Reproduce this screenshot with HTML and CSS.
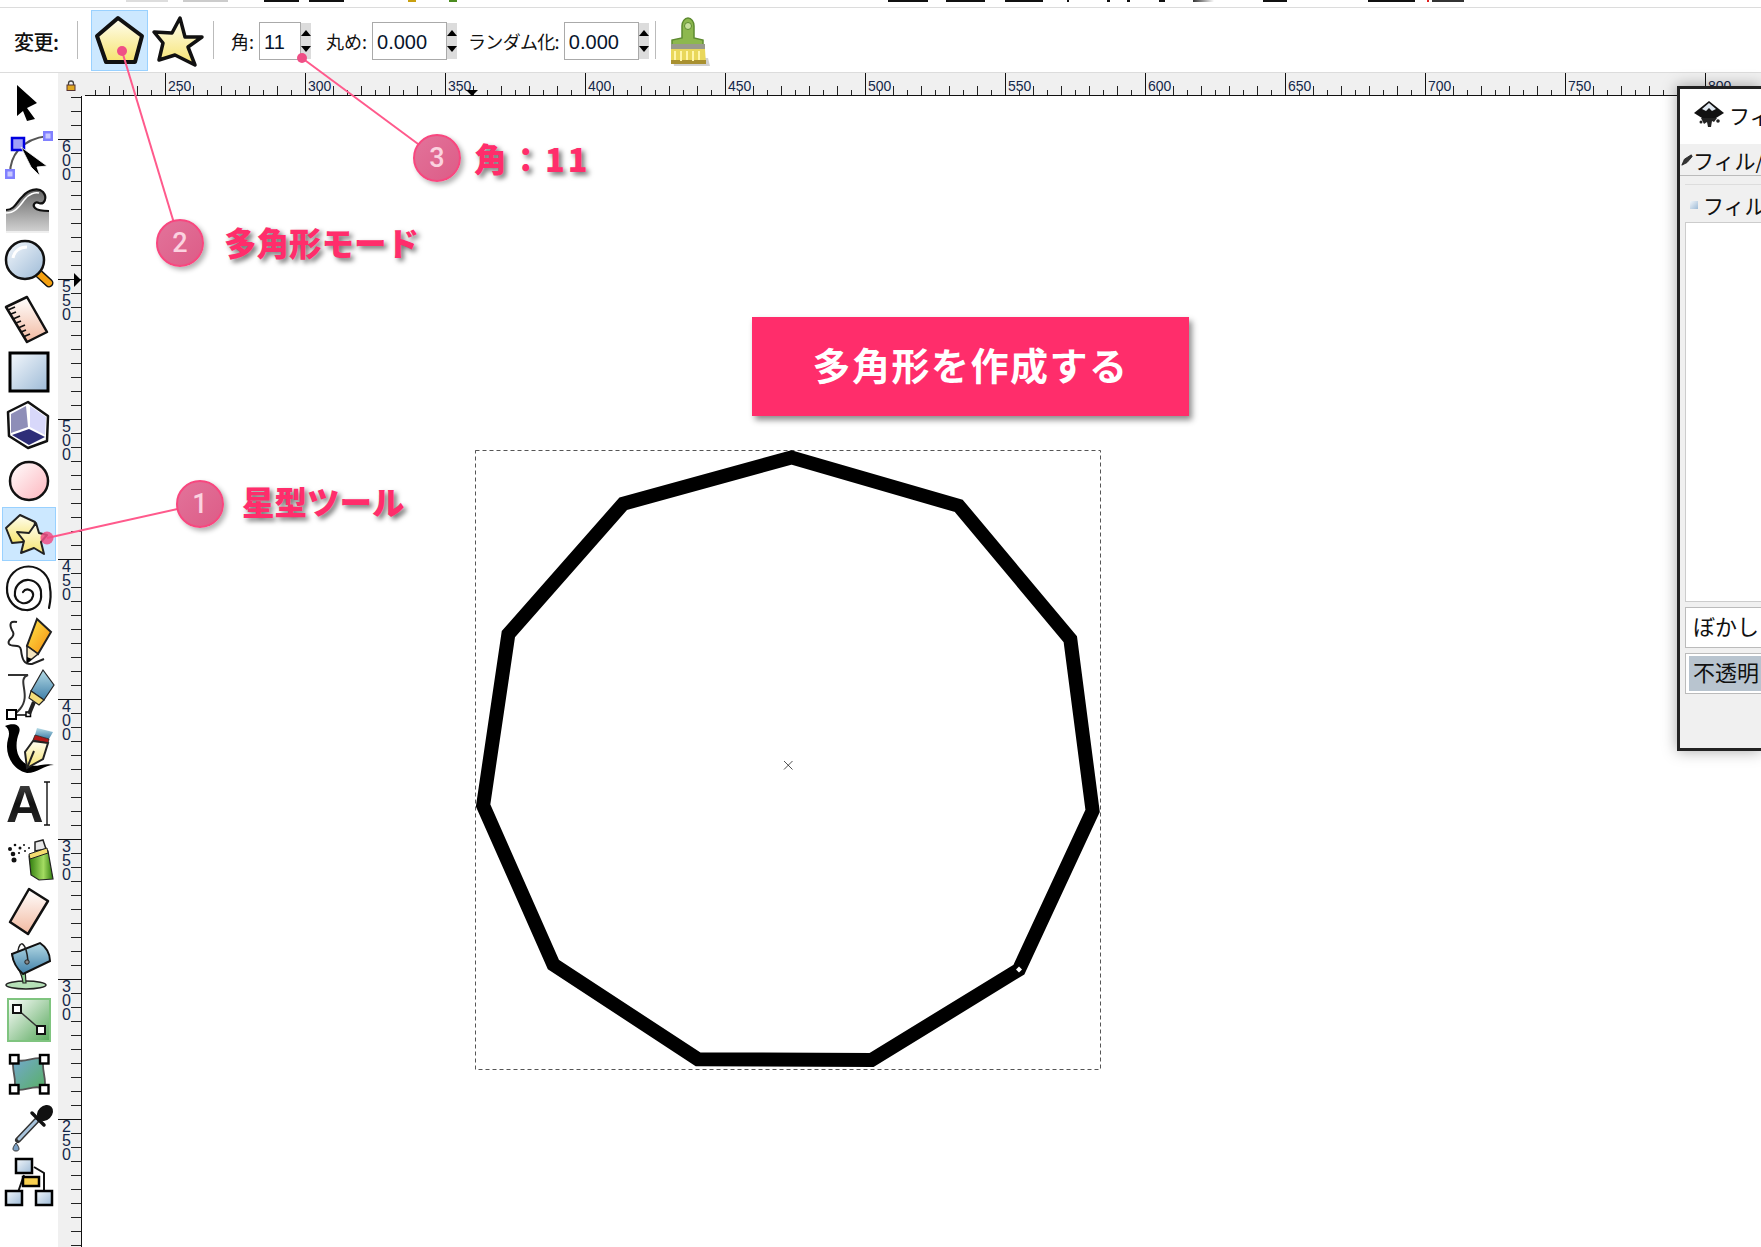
FILE: index.html
```html
<!DOCTYPE HTML>
<html>
    <head>
        <meta charset="UTF-8">
        <title>多角形を作成する</title>
        <link rel="stylesheet" href="styles.css">
    </head>
    <body>
        <!-- shared gradients -->
        <svg class="defs" width="0" height="0">
            <defs>
                <linearGradient id="gYel" x1="0" y1="0" x2="0" y2="1"><stop offset="0" stop-color="#fffef2"/><stop offset="1" stop-color="#f6e36e"/></linearGradient>
                <linearGradient id="gBlue" x1="0" y1="0" x2="1" y2="1"><stop offset="0" stop-color="#f4f8fc"/><stop offset="1" stop-color="#9dbad6"/></linearGradient>
                <linearGradient id="gSkin" x1="0" y1="0" x2="0" y2="1"><stop offset="0" stop-color="#fff"/><stop offset="1" stop-color="#f2b9a0"/></linearGradient>
                <linearGradient id="gPink" x1="0" y1="0" x2="1" y2="1"><stop offset="0" stop-color="#fff"/><stop offset="1" stop-color="#fdb4bc"/></linearGradient>
                <linearGradient id="gGray" x1="0" y1="0" x2="0" y2="1"><stop offset="0" stop-color="#666"/><stop offset="1" stop-color="#d0d0d0"/></linearGradient>
                <linearGradient id="gGreen" x1="0" y1="0" x2="1" y2="1"><stop offset="0" stop-color="#fff"/><stop offset="1" stop-color="#58a85c"/></linearGradient>
                <linearGradient id="gOrange" x1="0" y1="0" x2="1" y2="1"><stop offset="0" stop-color="#ffe94a"/><stop offset="1" stop-color="#f48a10"/></linearGradient>
                <linearGradient id="gSteel" x1="0" y1="0" x2="0" y2="1"><stop offset="0" stop-color="#b5dbe6"/><stop offset="1" stop-color="#3f7fa8"/></linearGradient>
                <linearGradient id="gSpray" x1="0" y1="0" x2="1" y2="0"><stop offset="0" stop-color="#2f7c0c"/><stop offset=".6" stop-color="#a4dc62"/><stop offset="1" stop-color="#2f7c0c"/></linearGradient>
                <linearGradient id="gMesh" x1="0" y1="0" x2="1" y2="1"><stop offset="0" stop-color="#74a8d0"/><stop offset="1" stop-color="#58b064"/></linearGradient>
                <linearGradient id="gInk" x1="0" y1="0" x2="0" y2="1"><stop offset="0" stop-color="#555"/><stop offset=".5" stop-color="#111"/><stop offset="1" stop-color="#333"/></linearGradient>
            </defs>
        </svg>

        <div class="topStrip"></div>

        <div class="toolbar">
            <span class="barLabel">変更:</span>
            <i class="sep sepA"></i>
            <button class="modeBtn on">
                <svg width="57" height="61" viewBox="0 0 57 61"><polygon points="27,8 51,26 44,52 15,52 6,26" fill="url(#gYel)" stroke="#111" stroke-width="4" stroke-linejoin="round"/></svg>
            </button>
            <button class="modeBtn">
                <svg width="57" height="61" viewBox="0 0 57 61"><polygon points="30,8 35,27 52,27 38,37 45,55 25,45 9,50 13,33 4,22 22,23" fill="url(#gYel)" stroke="#111" stroke-width="3.5" stroke-linejoin="round"/></svg>
            </button>
            <i class="sep sepB"></i>
            <label class="field f1">角:<span class="numBox w42">11</span><span class="spin"><b class="up"></b><b class="down"></b></span></label>
            <label class="field f2">丸め:<span class="numBox w74">0.000</span><span class="spin"><b class="up"></b><b class="down"></b></span></label>
            <label class="field f3">ランダム化:<span class="numBox w74">0.000</span><span class="spin"><b class="up"></b><b class="down"></b></span></label>
            <i class="sep sepC"></i>
            <svg class="brush" width="44" height="52" viewBox="0 0 44 52">
                <path d="M7 42 L42 42 L44 50 L8 50Z" fill="#999" opacity=".45"/>
                <path d="M16 10 a6 8 0 0 1 12 0 L28 22 L37 24 L37 30 L6 30 L6 24 L16 22Z" fill="#8db84e" stroke="#5d8a30" stroke-width="1.5"/>
                <circle cx="22" cy="10" r="3.5" fill="#c7df9a" stroke="#5d8a30"/>
                <rect x="5" y="28" width="34" height="5" fill="#9a9a8c"/>
                <path d="M5 33 L39 33 L40 48 L5 48Z" fill="#e9d75a"/>
                <path d="M5 44 L40 44 L40 48 L5 48Z" fill="#a89030"/>
                <path d="M9 35 L9 44 M15 35 L15 45 M21 35 L21 44 M27 35 L27 45 M33 35 L33 44" stroke="#fff5a8" stroke-width="2"/>
            </svg>
        </div>

        <div class="main">
            <div class="toolbox">
                <div class="tool"><svg viewBox="0 0 54 54"><polygon points="15,10 35,28 25,33 33,44 25,46 21,36 15,41" fill="#000"/></svg></div>
                <div class="tool"><svg viewBox="0 0 54 54"><path d="M8 45 C8 28 18 10 46 7" fill="none" stroke="#555" stroke-width="2"/><rect x="3" y="40" width="10" height="10" fill="#8080ff"/><rect x="5.5" y="42.5" width="5" height="5" fill="#c8c8ff"/><rect x="41" y="2" width="10" height="10" fill="#8080ff"/><rect x="43.500" y="4.500" width="5" height="5" fill="#c8c8ff"/><rect x="10" y="9" width="12" height="12" fill="#a0a0f8" stroke="#0000e0" stroke-width="2.5"/><polygon points="19,18 45,37 35,38 38,47 29,38" fill="#000" stroke="#fff" stroke-width=".8"/></svg></div>
                <div class="tool"><svg viewBox="0 0 54 54"><path d="M4 27 C13 27 15 18 21 13 C26 7 36 4 41 9 C46 15 42 22 37 20 C33 18 30 22 33 25 C35 27 38 28 47 28 L47 48 L4 48Z" fill="url(#gGray)"/><path d="M4 27 C13 27 15 18 21 13 C26 7 36 4 41 9 C46 15 42 22 37 20 C33 18 30 22 33 25 C35 27 38 28 47 28" fill="none" stroke="#111" stroke-width="2.2"/><path d="M4 30 C14 30 18 22 23 16 C27 11 33 9 37 10" fill="none" stroke="#fff" stroke-width="1.6"/><path d="M4 49 L47 49" stroke="#ddd"/></svg></div>
                <div class="tool"><svg viewBox="0 0 54 54"><path d="M33 33 L47 46" stroke="#111" stroke-width="9" stroke-linecap="round"/><path d="M36 36 L47 46" stroke="#f4a010" stroke-width="6" stroke-linecap="round"/><path d="M33 33 L37 37" stroke="#999" stroke-width="7"/><circle cx="23" cy="23" r="19" fill="url(#gBlue)" stroke="#111" stroke-width="2.5"/><path d="M11 21 C12 14 18 10 25 10" fill="none" stroke="#fff" stroke-width="3"/></svg></div>
                <div class="tool"><svg viewBox="0 0 54 54"><polygon points="4,16 25,6 45,41 25,51" fill="url(#gSkin)" stroke="#111" stroke-width="2.5" stroke-linejoin="round"/><path d="M6 19 L13 16 M9 23 L14 21 M11 28 L18 25 M14 32 L19 30 M16 37 L23 34 M19 41 L24 39 M21 46 L28 43" stroke="#111" stroke-width="1.8"/></svg></div>
                <div class="tool"><svg viewBox="0 0 54 54"><rect x="8" y="8" width="38" height="38" fill="url(#gBlue)" stroke="#000" stroke-width="3"/></svg></div>
                <div class="tool"><svg viewBox="0 0 54 54"><polygon points="26,3 46,17 45,42 26,49 7,37 6,13" fill="#fff" stroke="#111" stroke-width="2.5" stroke-linejoin="round"/><polygon points="28,7 44,18 43,36 28,28" fill="#d8d8fa"/><polygon points="24,7 9,15 9,34 26,28" fill="#8e8eb8"/><polygon points="27,30 43,38 27,46 10,36" fill="#2e2e78"/></svg></div>
                <div class="tool"><svg viewBox="0 0 54 54"><circle cx="27" cy="28" r="19" fill="url(#gPink)" stroke="#111" stroke-width="2.5"/></svg></div>
                <div class="tool on"><svg viewBox="0 0 54 54"><polygon points="18,8 33,15 31,34 10,36 4,21" fill="url(#gYel)" stroke="#222" stroke-width="2" stroke-linejoin="round"/><polygon points="34,16 37,26 45,28 39,35 42,47 32,41 19,46 22,34 15,25 27,26" fill="url(#gYel)" stroke="#222" stroke-width="2" stroke-linejoin="round"/></svg></div>
                <div class="tool"><svg viewBox="0 0 54 54"><path d="M47 47 C49 38 49 32 48 27 A21.5 21.5 0 0 0 5 27 A19 21 0 0 0 24 49 A14 14 0 0 0 39 33 A12.5 12.5 0 0 0 13 31 A9 9 0 0 0 31 35 A5.500 5.500 0 0 0 21 31" fill="none" stroke="#111" stroke-width="2.2" stroke-linecap="round"/></svg></div>
                <div class="tool"><svg viewBox="0 0 54 54"><path d="M15 7 C6 5 8 12 11 17 C14 23 4 24 7 29 C10 33 18 28 19 35 C20 44 22 50 30 49 L42 44" fill="none" stroke="#222" stroke-width="2"/><polygon points="35,4 49,17 36,39 25,31" fill="url(#gOrange)" stroke="#222" stroke-width="2"/><polygon points="25,31 36,39 25,48" fill="#f5e6c0" stroke="#222" stroke-width="1.5"/><polygon points="25,42 30,44 25,48" fill="#000"/></svg></div>
                <div class="tool"><svg viewBox="0 0 54 54"><path d="M6 6 L26 6 C14 10 30 26 18 40 L12 46" fill="none" stroke="#333" stroke-width="2"/><rect x="5" y="41" width="9" height="9" fill="#fff" stroke="#000" stroke-width="2"/><path d="M13 46 L24 46" stroke="#000" stroke-width="1.5"/><rect x="24" y="43" width="4.5" height="4.5" fill="#fff" stroke="#000" stroke-width="1.5"/><polygon points="41,1 52,16 42,31 29,22" fill="url(#gSteel)" stroke="#222" stroke-width="1.2"/><polygon points="29,22 42,31 37,36 27,29" fill="#f5de7a" stroke="#222" stroke-width="1.2"/><path d="M32 33 L27 45" stroke="#222" stroke-width="4"/></svg></div>
                <div class="tool"><svg viewBox="0 0 54 54"><path d="M3 3 C12 -1 20 2 17 10 C13 20 13 34 24 41 C33 46 42 39 52 42 C42 42 36 50 25 50 C10 47 2 30 6 16 C8 10 7 6 3 3Z" fill="#000"/><polygon points="35,5 51,9 47,16 33,12" fill="url(#gSteel)"/><polygon points="33,12 47,16 46,20 31,17" fill="#b01818" stroke="#222" stroke-width=".8"/><polygon points="31,18 46,20 41,36 25,45 23,29" fill="url(#gYel)" stroke="#222" stroke-width="2"/><path d="M25 45 L32 28" stroke="#222" stroke-width="2"/></svg></div>
                <div class="tool"><svg viewBox="0 0 54 54"><text class="iconA" x="4" y="45">A</text><path d="M42 5 L48 5 M45 5 L45 48 M42 48 L48 48" stroke="#111" stroke-width="1.4" fill="none"/></svg></div>
                <div class="tool"><svg viewBox="0 0 54 54"><g fill="#111"><circle cx="8" cy="18" r="2"/><circle cx="13" cy="14" r="1.3"/><circle cx="18" cy="17" r="1.5"/><circle cx="11" cy="23" r="2.3"/><circle cx="17" cy="22" r="1.1"/><circle cx="23" cy="20" r="1"/><circle cx="12" cy="29" r="2.5"/><circle cx="22" cy="14" r="1"/><circle cx="27" cy="17" r="1"/></g><path d="M33 20 L33 11 L41 9 L44 18Z" fill="#e8e8e8" stroke="#222" stroke-width="1.5"/><polygon points="27,25 46,20 51,48 37,49 29,44" fill="url(#gSpray)" stroke="#222" stroke-width="1.2"/><polygon points="27,23 45,17 46,22 28,28" fill="#f4dc70" stroke="#222"/></svg></div>
                <div class="tool"><svg viewBox="0 0 54 54"><polygon points="27,4 46,16 26,49 8,37" fill="url(#gSkin)" stroke="#111" stroke-width="2.5" stroke-linejoin="round"/></svg></div>
                <div class="tool"><svg viewBox="0 0 54 54"><ellipse cx="24" cy="46" rx="20" ry="4" fill="#b6e0b8" stroke="#222" stroke-width="1.5"/><path d="M10 15 C10 24 20 30 21 44 L24 44 C24 34 22 28 21 22Z" fill="#8cd090" stroke="#222" stroke-width="1.2"/><path d="M10 15 L38 4 C44 8 48 15 48 22 L21 35 C15 30 11 23 10 15Z" fill="url(#gSteel)" stroke="#111" stroke-width="2"/><path d="M16 12 C18 0 24 3 26 22" fill="none" stroke="#222" stroke-width="1.5"/><circle cx="25" cy="23" r="2.2" fill="#888" stroke="#222"/></svg></div>
                <div class="tool"><svg viewBox="0 0 54 54"><rect x="6" y="6" width="42" height="42" fill="url(#gGreen)" stroke="#7fc47f" stroke-width="2"/><path d="M15 16 L39 37" stroke="#333" stroke-width="1.5"/><rect x="11" y="12" width="8" height="8" fill="#fff" stroke="#111" stroke-width="2"/><rect x="35" y="33" width="8" height="8" fill="#fff" stroke="#111" stroke-width="2"/></svg></div>
                <div class="tool"><svg viewBox="0 0 54 54"><path d="M12 12 C20 18 34 8 42 12 C38 20 46 34 42 42 C34 36 20 46 12 42 C16 34 8 20 12 12Z" fill="url(#gMesh)" stroke="#555" stroke-width="1.8"/><g fill="#fff" stroke="#000" stroke-width="2.4"><rect x="8" y="8" width="8.500" height="8.500"/><rect x="38" y="8" width="8.500" height="8.500"/><rect x="8" y="38" width="8.500" height="8.500"/><rect x="38" y="38" width="8.500" height="8.500"/></g></svg></div>
                <div class="tool"><svg viewBox="0 0 54 54"><path d="M36 18 L16 39" stroke="#333" stroke-width="6" stroke-linecap="round"/><path d="M34 20 L17 38" stroke="#a8c4dc" stroke-width="3" stroke-linecap="round"/><path d="M30 12 L42 24" stroke="#111" stroke-width="3.5" stroke-linecap="round"/><ellipse cx="43" cy="12" rx="7" ry="9" transform="rotate(45 43 12)" fill="#111"/><path d="M14 42 C10 47 10 50 14 50 C18 50 18 47 14 42Z" fill="#7ba0c4" stroke="#333"/></svg></div>
                <div class="tool"><svg viewBox="0 0 54 54"><path d="M22 20 L14 43 M32 12 L42 18 L42 40" fill="none" stroke="#111" stroke-width="2"/><rect x="14" y="4" width="16" height="14" fill="url(#gBlue)" stroke="#000" stroke-width="2.5"/><rect x="4" y="36" width="16" height="14" fill="url(#gBlue)" stroke="#000" stroke-width="2.5"/><rect x="34" y="36" width="16" height="14" fill="url(#gBlue)" stroke="#000" stroke-width="2.5"/><rect x="21" y="22" width="16" height="9" fill="#f8d050" stroke="#000" stroke-width="2.5"/></svg></div>
            </div>

            <div class="work">
                <div class="hruler">
                    <div class="corner">
                        <svg width="10" height="11" viewBox="0 0 10 11"><path d="M2.5 5 V3.5 a2.5 2.5 0 0 1 5 0 V5" fill="none" stroke="#444" stroke-width="1.3"/><rect x="1" y="5" width="8" height="5.5" fill="#e0a820" stroke="#533"/></svg>
                    </div>
                    <div class="hticks">
                        <div class="hcell first"></div>
                        <div class="hcell">250</div>
                        <div class="hcell">300</div>
                        <div class="hcell">350</div>
                        <div class="hcell">400</div>
                        <div class="hcell">450</div>
                        <div class="hcell">500</div>
                        <div class="hcell">550</div>
                        <div class="hcell">600</div>
                        <div class="hcell">650</div>
                        <div class="hcell">700</div>
                        <div class="hcell">750</div>
                        <div class="hcell">800</div>
                    </div>
                </div>
                <div class="workBody">
                    <div class="vruler">
                        <div class="vcell first"></div>
                        <div class="vcell"><span>600</span></div>
                        <div class="vcell"><span>550</span></div>
                        <div class="vcell"><span>500</span></div>
                        <div class="vcell"><span>450</span></div>
                        <div class="vcell"><span>400</span></div>
                        <div class="vcell"><span>350</span></div>
                        <div class="vcell"><span>300</span></div>
                        <div class="vcell"><span>250</span></div>
                    </div>
                    <div class="canvas"></div>
                </div>
            </div>
        </div>

        <!-- ruler position markers -->
        <i class="mark markTop"></i>
        <i class="mark markLeft"></i>

        <!-- floating dialog, cut by the window edge -->
        <div class="dialog">
            <div class="dlgHead">
                <svg width="30" height="28" viewBox="0 0 30 28"><path d="M15 0 L30 12 L22 17 L8 17 L0 12Z" fill="#111"/><path d="M15 2 L22 8 L18 10 L15 7 L12 10 L8 8Z" fill="#dfe7ef"/><path d="M7 17 L23 17 L20 21 L18 20 L17 26 L14 26 L13 21 L10 23 Z" fill="#222"/><circle cx="24" cy="20" r="1.8" fill="#222"/><circle cx="7" cy="21" r="1.5" fill="#222"/></svg>
                <span>フィ</span>
            </div>
            <div class="dlgTab">
                <svg width="12" height="14" viewBox="0 0 14 14"><path d="M1 13 L4 6 L12 1 L13 3 L7 10Z" fill="#333" stroke="#222"/></svg>
                <span>フィル/ス</span>
            </div>
            <div class="dlgPanel">
                <div class="dlgFill"><i class="swatch"></i><span>フィル(</span></div>
                <div class="dlgBox"></div>
                <div class="dlgRow">ぼかし (</div>
                <div class="dlgRow opacity"><span>不透明</span></div>
            </div>
        </div>

        <!-- annotations -->
        <svg class="overlay" width="1761" height="1247" viewBox="0 0 1761 1247">
            <rect x="475.5" y="450.5" width="625" height="619" fill="none" stroke="#555" stroke-dasharray="4 3"/>
            <polygon points="791.2,457.4 958.7,505.8 1070.3,639.2 1092.6,810.9 1018.9,969.6 871.6,1060 697.8,1059.2 553.4,964.5 483.1,805.4 508.4,634.1 623.3,503.7" fill="none" stroke="#000" stroke-width="14"/>
            <path d="M784 761 L792.5 769.5 M792.5 761 L784 769.5" stroke="#222" stroke-width=".8"/>
            <polygon points="1019,966.6 1022,969.6 1019,972.6 1016,969.6" fill="#fff"/>
            <g stroke="#ff5a8c" stroke-width="2" fill="#ef4f86">
                <line x1="200" y1="504" x2="47" y2="538"/>
                <line x1="180" y1="243" x2="122" y2="51"/>
                <line x1="437" y1="158" x2="302" y2="58"/>
                <circle cx="47" cy="538" r="6.500" stroke="none" opacity=".85"/>
                <circle cx="122" cy="51" r="5" stroke="none"/>
                <circle cx="302" cy="58" r="5" stroke="none"/>
            </g>
        </svg>

        <div class="banner">多角形を作成する</div>

        <div class="callout c1"><span class="num">1</span><span class="note">星型ツール</span></div>
        <div class="callout c2"><span class="num">2</span><span class="note">多角形モード</span></div>
        <div class="callout c3"><span class="num">3</span><span class="note wide">角：11</span></div>
    </body>
</html>
```

FILE: styles.css
```css
html,body{height:100%;margin:0;}
body{
    display:flex;
    flex-direction:column;
    overflow:hidden;
    position:relative;
    background:#fff;
    font-family:"Noto Sans CJK JP","Noto Sans",sans-serif;
    color:#111;
}
i{display:block;}
.defs{position:absolute;}

/* cropped window above the toolbar */
.topStrip{
    flex:0 0 7px;
    border-bottom:1px solid #dcdcdc;
    background:linear-gradient(90deg,
        #fff 126px,#ddd 126px 168px,#fff 168px 183px,#ccc 183px 228px,#fff 228px 264px,
        #111 264px 299px,#fff 299px 309px,#111 309px 344px,#fff 344px 408px,
        #c9a010 408px 416px,#fff 416px 449px,#4c8c20 449px 457px,#fff 457px 888px,
        #111 888px 928px,#fff 928px 946px,#111 946px 985px,#fff 985px 1005px,
        #111 1005px 1043px,#fff 1043px 1067px,#111 1067px 1069px,#fff 1069px 1107px,
        #111 1107px 1110px,#fff 1110px 1127px,#111 1127px 1130px,#fff 1130px 1159px,
        #111 1159px 1165px,#fff 1165px 1193px,#333 1193px,#fff 1214px,#fff 1263px,
        #111 1263px 1287px,#fff 1287px 1368px,#111 1368px 1415px,#fff 1415px 1427px,
        #e02020 1427px 1429px,#fff 1429px 1432px,#333 1432px 1464px,#fff 1464px) 0 0/100% 2px no-repeat;
}

/* toolbar */
.toolbar{
    flex:0 0 65px;
    box-sizing:border-box;
    display:flex;
    align-items:center;
    padding-left:14px;
    border-bottom:1px solid #dcdcdc;
}
.barLabel{width:46px;font-size:20px;font-weight:500;white-space:nowrap;margin-top:2px;letter-spacing:-.5px;}
.sep{width:1px;height:38px;background:#bbb;}
.sepA{margin:0 13px 0 17px;}
.sepB{margin:0 17px 0 4px;}
.sepC{margin:0 10px 0 6px;}
.modeBtn{
    width:57px;
    height:61px;
    margin:0 2px 0 0;
    padding:0;
    border:0;
    background:none;
}
.modeBtn svg{display:block;}
.modeBtn.on{background:#cce8ff;box-shadow:inset 0 0 0 1px #99d1ff;}
.field{display:flex;align-items:center;font-size:18px;white-space:nowrap;margin-top:1px;}
.f1{margin-right:15px;}
.f2{margin-right:11px;}
.f3{letter-spacing:-.7px;}
.numBox{
    box-sizing:border-box;
    height:38px;
    margin-left:5px;
    padding:2px 0 0 4px;
    border:1px solid #aaa;
    font:20px/34px "Liberation Sans",sans-serif;
    letter-spacing:0;
    color:#07142c;
}
.w42{width:42px;}
.w74{width:75px;}
.spin{
    width:10px;
    height:36px;
    background:#dcdcdc;
    display:flex;
    flex-direction:column;
    align-items:center;
    justify-content:space-between;
    padding:7px 0;
    box-sizing:border-box;
}
.spin b{width:0;height:0;border:5px solid transparent;}
.spin .up{border-top:0;border-bottom:6px solid #000;}
.spin .down{border-bottom:0;border-top:6px solid #000;}
.brush{display:block;margin-top:4px;}

/* main area */
.main{flex:1;display:flex;min-height:0;}
.toolbox{width:58px;flex:none;padding-top:2px;box-sizing:border-box;}
.tool{width:54px;height:54px;margin:0 2px;}
.tool svg{display:block;width:54px;height:54px;overflow:visible;}
.tool.on{background:#cce8ff;box-shadow:inset 0 0 0 1px #99d1ff;}
.iconA{font:bold 52px "Liberation Sans",sans-serif;fill:url(#gInk);}
.work{flex:1;display:flex;flex-direction:column;min-width:0;}

/* rulers */
.hruler{flex:0 0 23px;display:flex;background:#f0f0f0;}
.corner{width:27px;flex:none;padding:7px 0 0 8px;box-sizing:border-box;}
.corner svg{display:block;}
.hticks{flex:1;display:flex;overflow:hidden;border-bottom:1px solid #111;}
.hcell{
    flex:0 0 140px;
    box-sizing:border-box;
    padding:6px 0 0 2px;
    border-left:1px solid #111;
    font:14px/14px "Liberation Sans",sans-serif;
    color:#14274a;
    background:
        repeating-linear-gradient(90deg,transparent 0 27px,#222 27px 28px) left bottom/100% 9px no-repeat,
        repeating-linear-gradient(90deg,transparent 0 13px,#222 13px 14px,transparent 14px 28px) left bottom/100% 5px no-repeat;
}
.hcell.first{margin-left:-60px;}
.workBody{flex:1;display:flex;min-height:0;}
.vruler{
    width:24px;
    flex:none;
    box-sizing:border-box;
    overflow:hidden;
    border-right:1px solid #111;
    background:#f0f0f0;
}
.vcell{
    height:140px;
    box-sizing:border-box;
    padding:0 0 0 4px;
    border-top:1px solid #111;
    font:16px/14px "Liberation Sans",sans-serif;
    color:#14274a;
    background:
        repeating-linear-gradient(180deg,transparent 0 13px,#222 13px 14px) right top/10px 100% no-repeat;
}
.vcell.first{margin-top:-97px;}
.vcell span{display:block;width:9px;word-break:break-all;}
.canvas{flex:1;background:#fff;}

.mark{position:absolute;width:0;height:0;border:solid transparent;}
.markTop{left:466px;top:90px;border-width:6px 6px 0;border-top-color:#000;}
.markLeft{left:74px;top:273px;border-width:7px 0 7px 7px;border-left-color:#000;}

/* dialog window */
.dialog{
    position:absolute;
    left:1677px;
    top:86px;
    width:84px;
    height:665px;
    box-sizing:border-box;
    display:flex;
    flex-direction:column;
    border:3px solid #222;
    border-right:0;
    background:#f0f0f0;
    box-shadow:0 0 14px rgba(0,0,0,.35);
    white-space:nowrap;
    overflow:hidden;
}
.dlgHead{
    flex:0 0 55px;
    box-sizing:border-box;
    display:flex;
    align-items:center;
    gap:5px;
    padding:0 0 4px 14px;
    background:#fff;
    font-size:21px;
}
.dlgHead svg,.dlgTab svg{flex:none;}
.dlgTab{
    flex:0 0 32px;
    box-sizing:border-box;
    display:flex;
    align-items:center;
    padding-left:1px;
    font-size:21px;
    border-bottom:1px solid #bbb;
}
.dlgPanel{flex:1;padding:8px 0 0 5px;}
.dlgFill{
    display:flex;
    align-items:center;
    box-sizing:border-box;
    height:38px;
    padding:2px 0 0 5px;
    border-top:1px solid #ddd;
    font-size:21px;
}
.swatch{flex:none;width:8px;height:8px;margin-right:5px;background:linear-gradient(135deg,#f2f6fa,#9dbad6);}
.dlgBox{height:380px;background:#fff;border:1px solid #ccc;border-right:0;box-sizing:border-box;}
.dlgRow{
    box-sizing:border-box;
    height:41px;
    margin-top:5px;
    padding-left:7px;
    background:#fff;
    border:1px solid #bbb;
    border-right:0;
    font-size:22px;
    line-height:34px;
}
.dlgRow.opacity{padding:2px 0 2px 3px;}
.opacity span{display:block;height:35px;padding-left:4px;line-height:31px;background:#b8c4cf;}

/* annotations */
.overlay{position:absolute;left:0;top:0;pointer-events:none;}
.banner{
    position:absolute;
    left:752px;
    top:317px;
    width:437px;
    height:99px;
    box-sizing:border-box;
    padding-bottom:6px;
    display:flex;
    align-items:center;
    justify-content:center;
    background:#ff2d6b;
    box-shadow:3px 4px 6px rgba(0,0,0,.45);
    color:#fff;
    font-size:38px;
    font-weight:700;
    letter-spacing:1.5px;
    white-space:nowrap;
}
.callout{position:absolute;display:flex;align-items:center;white-space:nowrap;}
.c1{left:176px;top:480px;gap:18px;}
.c2{left:156px;top:219px;gap:20px;}
.c3{left:413px;top:134px;gap:13px;}
.num{
    width:48px;
    height:48px;
    box-sizing:border-box;
    border:2px solid #f8477f;
    border-radius:50%;
    background:linear-gradient(135deg,#e2739a,#dd5c87);
    box-shadow:3px 3px 5px rgba(0,0,0,.3);
    color:#fbd3e0;
    font:500 27px/44px Roboto,sans-serif;
    text-align:center;
}
.note{
    font-size:32.5px;
    font-weight:900;
    line-height:48px;
    color:#ff2d6b;
    -webkit-text-stroke:2px #fff;
    paint-order:stroke fill;
    text-shadow:3px 3px 5px rgba(0,0,0,.55);
}
.c1 .note{margin-top:-6px;}
.c2 .note{margin-top:-2px;}
.c3 .note{margin-top:-1px;}
.note.wide{letter-spacing:3px;}
```
